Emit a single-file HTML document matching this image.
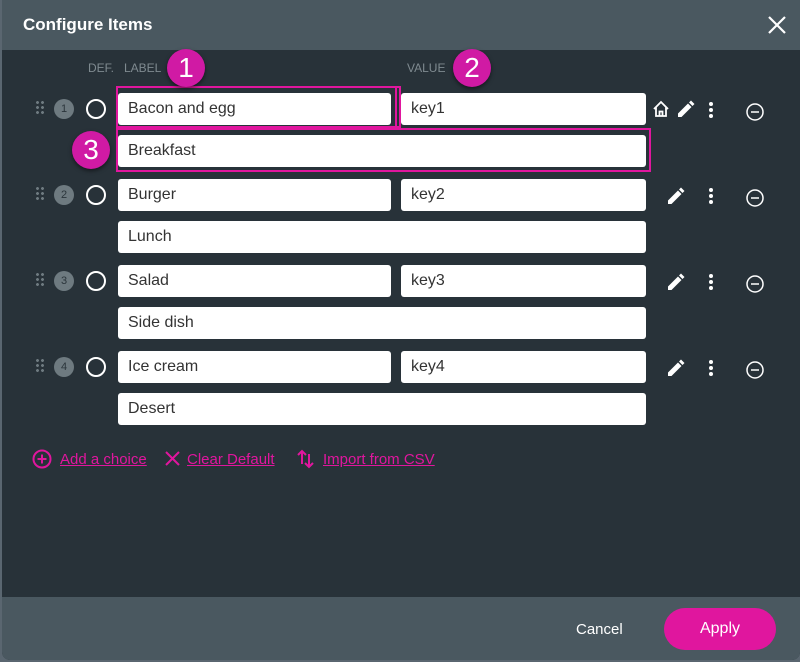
<!DOCTYPE html>
<html><head><style>
*{margin:0;padding:0;box-sizing:border-box}
body{width:800px;height:662px;background:#5a6670;font-family:"Liberation Sans",sans-serif;position:relative;overflow:hidden}
.m{position:absolute;left:2px;top:0;width:798px;height:660px;background:#283239;border-radius:0 0 8px 8px;overflow:hidden}
.hd{position:absolute;left:0;top:0;width:100%;height:50px;background:#4a5860}
.hd h1{position:absolute;left:21px;top:15px;font-size:17px;color:#fff;font-weight:bold}
.ft{position:absolute;left:0;top:597px;width:100%;height:63px;background:#4a5860}
.a{position:absolute}
.in{position:absolute;background:#fff;border-radius:3px;height:32px;font-size:16px;color:#333;padding:8px 10px;line-height:16px}
.lb{position:absolute;top:61px;font-size:12px;color:#7f8a90}
.dr{position:absolute;width:10px;height:16px;background:radial-gradient(circle,#6e7a80 1.3px,transparent 1.6px) 0 0/5px 5px}
.nb{position:absolute;width:20px;height:20px;border-radius:50%;background:#6e7a80;color:#2b353b;font-size:11px;text-align:center;line-height:20px}
.rd{position:absolute;width:20px;height:20px;border-radius:50%;border:2px solid #fff}
.bg{position:absolute;width:38px;height:38px;border-radius:50%;background:#d01aa4;color:#fff;font-size:28px;text-align:center;line-height:38px;box-shadow:0 2px 4px rgba(0,0,0,.5)}
.hl{position:absolute;border:2px solid #e0169e}
.lk{position:absolute;top:451px;color:#e0169e;font-size:15px;text-decoration:underline}
</style></head><body>
<div class="m">
<div class="hd"><h1>Configure Items</h1>
<svg class="a" style="left:766px;top:16px" width="18" height="18"><path d="M1 1L17 17M17 1L1 17" stroke="#fff" stroke-width="2.2"/></svg></div>
<div class="lb" style="left:86px">DEF.</div><div class="lb" style="left:122px">LABEL</div><div class="lb" style="left:405px">VALUE</div>

<div class="in" style="left:116px;top:93px;width:273px">Bacon and egg</div>
<div class="in" style="left:399px;top:93px;width:245px">key1</div>
<div class="in" style="left:116px;top:135px;width:528px">Breakfast</div>
<div class="in" style="left:116px;top:179px;width:273px">Burger</div>
<div class="in" style="left:399px;top:179px;width:245px">key2</div>
<div class="in" style="left:116px;top:221px;width:528px">Lunch</div>
<div class="in" style="left:116px;top:265px;width:273px">Salad</div>
<div class="in" style="left:399px;top:265px;width:245px">key3</div>
<div class="in" style="left:116px;top:307px;width:528px">Side dish</div>
<div class="in" style="left:116px;top:351px;width:273px">Ice cream</div>
<div class="in" style="left:399px;top:351px;width:245px">key4</div>
<div class="in" style="left:116px;top:393px;width:528px">Desert</div>

<div class="hl" style="left:114px;top:86px;width:281px;height:42px"></div>
<div class="hl" style="left:395px;top:86px;width:4px;height:42px;border-left:none"></div>
<div class="hl" style="left:114px;top:128px;width:535px;height:44px"></div>

<div class="dr" style="left:33px;top:100px"></div><div class="nb" style="left:52px;top:99px">1</div><div class="rd" style="left:84px;top:99px"></div>
<div class="dr" style="left:33px;top:186px"></div><div class="nb" style="left:52px;top:185px">2</div><div class="rd" style="left:84px;top:185px"></div>
<div class="dr" style="left:33px;top:272px"></div><div class="nb" style="left:52px;top:271px">3</div><div class="rd" style="left:84px;top:271px"></div>
<div class="dr" style="left:33px;top:358px"></div><div class="nb" style="left:52px;top:357px">4</div><div class="rd" style="left:84px;top:357px"></div>

<svg class="a" style="left:0;top:0" width="798" height="500">
<path d="M652 109L659 102L666 109M654 107.5V116H664V107.5M657.5 116V111.5H660.5V116" stroke="#fff" stroke-width="1.8" fill="none"/>
<g fill="#fff">
<path d="M676 117l0-3.5 10-10 3.5 3.5-10 10z M687 102.5l2-2 3.5 3.5-2 2z"/>
<path d="M666 204l0-3.5 10-10 3.5 3.5-10 10z M677 189.5l2-2 3.5 3.5-2 2z"/>
<path d="M666 290l0-3.5 10-10 3.5 3.5-10 10z M677 275.5l2-2 3.5 3.5-2 2z"/>
<path d="M666 376l0-3.5 10-10 3.5 3.5-10 10z M677 361.5l2-2 3.5 3.5-2 2z"/>
<circle cx="709" cy="104" r="2"/><circle cx="709" cy="110" r="2"/><circle cx="709" cy="116" r="2"/>
<circle cx="709" cy="190" r="2"/><circle cx="709" cy="196" r="2"/><circle cx="709" cy="202" r="2"/>
<circle cx="709" cy="276" r="2"/><circle cx="709" cy="282" r="2"/><circle cx="709" cy="288" r="2"/>
<circle cx="709" cy="362" r="2"/><circle cx="709" cy="368" r="2"/><circle cx="709" cy="374" r="2"/>
</g>
<g stroke="#fff" stroke-width="1.5" fill="none">
<circle cx="753" cy="112" r="8"/><path d="M749 112h8"/>
<circle cx="753" cy="198" r="8"/><path d="M749 198h8"/>
<circle cx="753" cy="284" r="8"/><path d="M749 284h8"/>
<circle cx="753" cy="370" r="8"/><path d="M749 370h8"/>
</g>
<g stroke="#e0169e" stroke-width="2" fill="none">
<circle cx="40" cy="459" r="8.5"/><path d="M35.5 459h9M40 454.5v9"/>
<path d="M164 452l13 13M177 452l-13 13"/>
<path d="M300 464V451M296 455l4-4 4 4M307 454v13M303 463l4 4 4-4"/>
</g></svg>
<div class="lk" style="left:58px">Add a choice</div>
<div class="lk" style="left:185px">Clear Default</div>
<div class="lk" style="left:321px">Import from CSV</div>

<div class="bg" style="left:165px;top:49px">1</div>
<div class="bg" style="left:451px;top:49px">2</div>
<div class="bg" style="left:70px;top:131px">3</div>

<div class="ft">
<div class="a" style="left:574px;top:24px;color:#fff;font-size:15px">Cancel</div>
<div class="a" style="left:662px;top:11px;width:112px;height:42px;border-radius:21px;background:#e0169e;color:#fff;font-size:16px;text-align:center;line-height:42px">Apply</div>
</div>
</div>
</body></html>
